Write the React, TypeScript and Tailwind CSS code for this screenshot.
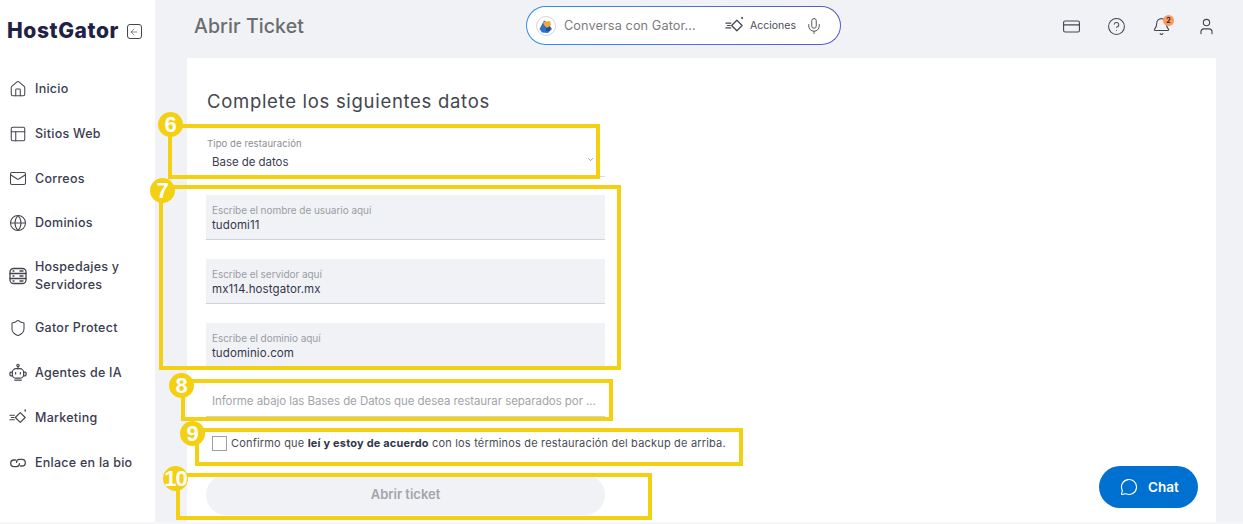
import React from "react";
import { House, PanelsTopLeft, Mail, Globe, Shield, ArrowLeft, CreditCard, CircleHelp, Bell, User, Mic, ChevronDown, MessageCircle } from "lucide-react";

const Spark = ({ size = 19 }: { size?: number }) => (
  <svg width={size} height={size} viewBox="0 0 20 20" fill="none" stroke="currentColor" strokeWidth="1.3" strokeLinecap="round" strokeLinejoin="round">
    <path d="M12.5 4.5 L18 10 L12.5 15.5 L7 10 Z" />
    <path d="M1 7.5h5M2.5 10h3M1 12.5h5" />
    <path d="M18 1.5v1.2" strokeWidth="1.6" />
  </svg>
);

const ServerIcon = () => (
  <svg width="18" height="18" viewBox="0 0 18 18" fill="none" stroke="currentColor" strokeWidth="1.3" strokeLinecap="round" strokeLinejoin="round">
    <rect x="1" y="1.5" width="16" height="15" rx="3.5" />
    <path d="M1 6.5h16M1 11.5h16" />
    <path d="M4 4h1M4 9h1M4 14h1M11 9h3M11 14h3M11 4h3" />
  </svg>
);

const BotIcon = () => (
  <svg width="19" height="19" viewBox="0 0 19 19" fill="none" stroke="currentColor" strokeWidth="1.3" strokeLinecap="round" strokeLinejoin="round">
    <circle cx="9.5" cy="2" r="1.2" />
    <path d="M9.5 3.2V5.5" />
    <rect x="3.5" y="5.5" width="12" height="10" rx="4" />
    <path d="M3.5 9H2a1 1 0 0 0-1 1v2a1 1 0 0 0 1 1h1.5M15.5 9H17a1 1 0 0 1 1 1v2a1 1 0 0 1-1 1h-1.5" />
    <path d="M7 9.5v1.5M12 9.5v1.5" />
    <path d="M6 17.5h7" />
  </svg>
);

const LinkIcon = () => (
  <svg width="18" height="18" viewBox="0 0 18 18" fill="none" stroke="currentColor" strokeWidth="1.3" strokeLinecap="round" strokeLinejoin="round">
    <path d="M6.5 6H5a3.3 3.3 0 0 0 0 6.6h2.5c1.8 0 3-1.4 3-3" />
    <path d="M11.5 12H13a3.3 3.3 0 0 0 0-6.6h-2.5c-1.8 0-3 1.4-3 3" />
  </svg>
);

const Gator = () => (
  <svg width="20" height="20" viewBox="0 0 20 20">
    <circle cx="10" cy="10" r="9.5" fill="#fff" stroke="#d3d6de" />
    <path d="M3.5 13 L8 4.5 L12 7 L16 13 L12 17 L6 16.5 Z" fill="#2f6fc4" />
    <path d="M7 6 L14 5 L15 9 L11 12 L8 9 Z" fill="#f4a63a" />
    <path d="M10 12 L14 11 L14 15 L10 15 Z" fill="#1f4f96" />
  </svg>
);

const nav: { label: React.ReactNode; icon: React.ReactNode; cls: string }[] = [
  { label: "Inicio", icon: <House size={18} strokeWidth={1.4} />, cls: "h-[45px]" },
  { label: "Sitios Web", icon: <PanelsTopLeft size={18} strokeWidth={1.4} />, cls: "h-[45px]" },
  { label: "Correos", icon: <Mail size={19} strokeWidth={1.4} />, cls: "h-[45px]" },
  { label: "Dominios", icon: <Globe size={18} strokeWidth={1.4} />, cls: "h-[44px]" },
  { label: <>Hospedajes y<br />Servidores</>, icon: <ServerIcon />, cls: "h-[61px]" },
  { label: "Gator Protect", icon: <Shield size={18} strokeWidth={1.4} />, cls: "h-[44px]" },
  { label: "Agentes de IA", icon: <BotIcon />, cls: "h-[45px]" },
  { label: "Marketing", icon: <Spark />, cls: "h-[45px]" },
  { label: "Enlace en la bio", icon: <LinkIcon />, cls: "h-[45px]" },
];

const Field = ({ label, value }: { label: string; value: string }) => (
  <div className="h-[45px] bg-[#f1f2f6] border-b border-[#cfd4dc] px-[6px] pt-[9px]">
    <div className="text-[10px] leading-[12px] tracking-[-0.05px] text-[#9a9da4]">{label}</div>
    <div className="mt-[1px] text-[11.5px] leading-[17px] tracking-[0.1px] text-[#33364a]">{value}</div>
  </div>
);

const Note = ({ n, box, dot, wide }: { n: string; box: string; dot: string; wide?: boolean }) => (
  <>
    <div className={`absolute border-[4px] border-[#f4d013] ${box}`} />
    <div
      className={`absolute w-[25px] h-[25px] rounded-full bg-[#f4d013] text-white flex items-center justify-center font-bold text-[22px] ${wide ? "tracking-[-1px]" : ""} ${dot}`}
      style={{ fontFamily: '"Liberation Sans", sans-serif' }}
    >
      {n}
    </div>
  </>
);

export default function App() {
  return (
    <div className="relative w-[1243px] h-[524px] overflow-hidden bg-[#f6f6f8] font-['Inter',sans-serif]">
      <div className="flex h-[522px]">
        <aside className="w-[155px] shrink-0 bg-white">
          <div className="flex items-center h-[66px] pl-[7px] pb-[5px]">
            <span className="text-[21px] font-extrabold tracking-[0.6px] text-[#1f2147]">HostGator</span>
            <span className="ml-[8px] mt-[2px] w-[15px] h-[15px] border border-[#44464f] rounded-[3px] flex items-center justify-center text-[#44464f]">
              <ArrowLeft size={10} strokeWidth={1.5} />
            </span>
          </div>
          <nav className="flex flex-col">
            {nav.map((n, i) => (
              <div key={i} className={`flex items-center pl-[9px] gap-[8px] text-[#3a3c50] ${n.cls}`}>
                <span className="w-[18px] flex justify-center text-[#44464f]">{n.icon}</span>
                <span className="text-[12.5px] leading-[18px] tracking-[0.25px] font-medium">{n.label}</span>
              </div>
            ))}
          </nav>
        </aside>
        <main className="flex-1 bg-[#f1f2f6] flex flex-col min-w-0">
          <header className="h-[58px] shrink-0 flex items-center pl-[39px] pr-[27px] relative">
            <h1 className="w-[332px] text-[19.5px] font-medium tracking-[0.1px] text-[#6b6c70] pb-[4px]">Abrir Ticket</h1>
            <div className="w-[315px] h-[39px] rounded-full p-px mb-[7px] bg-gradient-to-r from-[#2b8fec] to-[#5a58c8]">
              <div className="w-full h-full rounded-full bg-white flex items-center pl-[9px]">
                <Gator />
                <span className="ml-[8px] w-[161px] text-[12.7px] tracking-[0.1px] text-[#7b7c80] pt-[1px]">Conversa con Gator...</span>
                <span className="text-[#44464f]"><Spark size={19} /></span>
                <span className="ml-[6px] text-[10.5px] text-[#4a4c55] pt-[1px]">Acciones</span>
                <span className="ml-[9px] text-[#55575f]"><Mic size={18} strokeWidth={1.3} /></span>
              </div>
            </div>
            <div className="ml-auto flex items-center gap-[26px] text-[#44464f] pb-[6px]">
              <CreditCard size={19} strokeWidth={1.4} />
              <CircleHelp size={19} strokeWidth={1.3} />
              <span className="relative">
                <Bell size={19} strokeWidth={1.4} />
                <span className="absolute -top-[2px] -right-[3px] w-[11px] h-[11px] rounded-full bg-[#fb9a5c] text-[7px] font-bold leading-[11px] text-center text-[#1f2147]">2</span>
              </span>
              <User size={19} strokeWidth={1.4} />
            </div>
          </header>
          <section className="flex-1 ml-[32px] mr-[27px] bg-white pl-[19px] pt-[31px]">
            <h2 className="text-[18.5px] leading-[24px] tracking-[0.7px] text-[#44464f] h-[24px] pl-[1px]">Complete los siguientes datos</h2>
            <div className="w-[399px] mt-[24px]">
              <div className="h-[40px] border-b border-[#d8dbe0] relative">
                <div className="pl-[1px] text-[9.5px] leading-[12px] pt-[1px] tracking-[0.1px] text-[#8b8d93]">Tipo de restauración</div>
                <div className="pl-[6px] mt-[4px] text-[11.5px] leading-[16px] tracking-[-0.05px] text-[#3a3c50]">Base de datos</div>
                <ChevronDown size={9} className="absolute right-[10px] top-[18px] text-[#5b8fc9]" />
              </div>
              <div className="mt-[18px] flex flex-col gap-[19px]">
                <Field label="Escribe el nombre de usuario aquí" value="tudomi11" />
                <Field label="Escribe el servidor aquí" value="mx114.hostgator.mx" />
                <Field label="Escribe el dominio aquí" value="tudominio.com" />
              </div>
              <div className="mt-[22px] h-[27px] border-b border-[#cfd4dc] pl-[6px] pt-[1px] text-[11.5px] leading-[20px] tracking-[-0.07px] text-[#a2a4a9] whitespace-nowrap">
                Informe abajo las Bases de Datos que desea restaurar separados por ...
              </div>
              <div className="mt-[19px] pl-[6px] flex items-center whitespace-nowrap h-[15px]">
                <span className="w-[15px] h-[15px] border border-[#9aa0a8] shrink-0" />
                <span className="ml-[4px] text-[11px] tracking-[0.185px] text-[#4a4c55]">
                  Confirmo que <b className="font-bold text-[#33364a]">leí y estoy de acuerdo</b> con los términos de restauración del backup de arriba.
                </span>
              </div>
              <div className="mt-[24px] h-[40px] rounded-[20px] bg-[#f1f2f6] flex items-center justify-center text-[13px] font-semibold text-[#a2a5ab]">
                Abrir ticket
              </div>
            </div>
          </section>
        </main>
      </div>

      <Note n="6" box="left-[168px] top-[124px] w-[432px] h-[55px]" dot="left-[158px] top-[112px]" />
      <Note n="7" box="left-[159px] top-[185px] w-[462px] h-[185px]" dot="left-[150px] top-[178px]" />
      <Note n="8" box="left-[181px] top-[379px] w-[432px] h-[42px]" dot="left-[169px] top-[373px]" />
      <Note n="9" box="left-[195px] top-[428px] w-[548px] h-[38px]" dot="left-[180px] top-[421px]" />
      <Note n="10" box="left-[176px] top-[473px] w-[476px] h-[47px]" dot="left-[163px] top-[466px]" wide />

      <div className="absolute left-[1099px] top-[466px] w-[99px] h-[42px] rounded-full bg-[#0070d1] text-white flex items-center pl-[21px] gap-[10px]">
        <MessageCircle size={18} strokeWidth={1.5} />
        <span className="text-[13.5px] font-semibold">Chat</span>
      </div>
    </div>
  );
}
